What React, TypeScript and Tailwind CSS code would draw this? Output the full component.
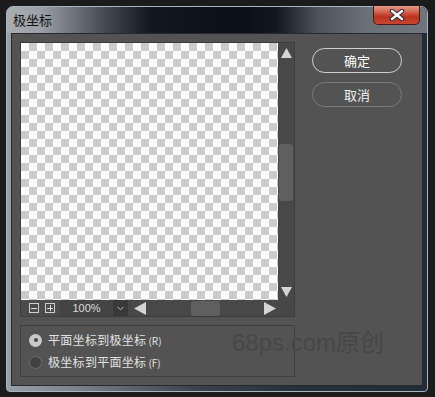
import React from "react"

function Tri({ dir, className }: { dir: "up" | "down" | "left" | "right"; className?: string }) {
  const pts = {
    up: "0,10 5.5,0 11,10",
    down: "0,0 11,0 5.5,10",
    left: "12,0 12,13 0,6.5",
    right: "0,0 12,6.5 0,13",
  }[dir]
  const vb = dir === "up" || dir === "down" ? "0 0 11 10" : "0 0 12 13"
  const w = dir === "up" || dir === "down" ? 11 : 12
  const h = dir === "up" || dir === "down" ? 10 : 13
  return (
    <svg width={w} height={h} viewBox={vb} className={className}>
      <polygon points={pts} fill="#d4d4d4" />
    </svg>
  )
}

function Radio({ checked, label, hint }: { checked?: boolean; label: string; hint: string }) {
  return (
    <div className="flex h-[22px] items-center gap-[6px]">
      {checked ? (
        <span className="flex h-[13px] w-[13px] items-center justify-center rounded-full bg-[#c9c9c9]">
          <span className="h-[4px] w-[4px] rounded-full bg-[#4a4a4a]" />
        </span>
      ) : (
        <span className="h-[13px] w-[13px] rounded-full border border-[#6c6c6c] bg-[#414141]" />
      )}
      <span className="text-[12px] tracking-[0.3px] text-[#e2e2e2]">
        {label}
        <span className="ml-[2px] text-[10px] tracking-normal">{hint}</span>
      </span>
    </div>
  )
}

export default function App() {
  return (
    <div className="h-[397px] w-[435px] overflow-hidden bg-[#1b1b1b] pl-[6px] pt-[6px] font-['Liberation_Sans','Noto_Sans_CJK_SC',sans-serif]">
      <div className="flex h-[386px] w-[422px] flex-col rounded-t-[7px] rounded-b-[4px] border border-[#aab4be] bg-[linear-gradient(to_right,#98a0a8_0%,#7d858d_15%,#39424d_45%,#26303b_70%,#222c37_100%)]">
        {/* title bar */}
        <div className="flex h-[26px] items-start justify-between rounded-t-[6px] bg-[linear-gradient(to_right,#a9adb2_0%,#9aa0a6_8%,#4a515b_22%,#121822_34%,#0a0f18_55%,#121821_64%,#4c535c_74%,#6a7179_86%,#6f767e_100%)] pl-[6px] pr-[7px]">
          <span className="mt-[5px] text-[13px] leading-[16px] text-[#141414] font-['Noto_Sans_CJK_SC',sans-serif]">
            极坐标
          </span>
          <div className="-mt-px flex h-[19px] w-[47px] items-center justify-center rounded-b-[5px] border border-t-0 border-[#4b1a14] bg-[linear-gradient(to_bottom,#e49a8c_0%,#d2604c_35%,#b8321f_60%,#c8472f_100%)]">
            <svg width="16" height="12" viewBox="0 0 16 12">
              <path d="M3 2 L13 10 M13 2 L3 10" stroke="#2a2a33" strokeWidth="4.5" strokeLinecap="round" />
              <path d="M3 2 L13 10 M13 2 L3 10" stroke="#ffffff" strokeWidth="2.4" strokeLinecap="round" />
            </svg>
          </div>
        </div>

        {/* content */}
        <div className="relative mx-[4px] flex h-[353px] border border-[#262a2f] bg-[#535353] font-['Noto_Sans_CJK_SC',sans-serif]">
          <div className="ml-[8px] mt-[8px] flex w-[275px] flex-col">
            {/* preview */}
            <div className="flex h-[275px] w-[275px] flex-col border border-[#3d3d3d] bg-[#4a4a4a]">
              <div className="flex h-[257px]">
                <div className="h-[257px] w-[257px] bg-[conic-gradient(#cccccc_25%,#ffffff_0_50%,#cccccc_0_75%,#ffffff_0)] bg-[length:16px_16px]" />
                <div className="flex w-[16px] flex-col items-center bg-[#484848] pb-[3px] pt-[5px]">
                  <Tri dir="up" />
                  <div className="flex-1" />
                  <div className="h-[57px] w-[14px] rounded-[3px] bg-[#5f5f5f]" />
                  <div className="flex-1" />
                  <Tri dir="down" />
                </div>
              </div>
              <div className="flex h-[16px] items-center">
                <div className="flex h-full w-[107px] items-center bg-[#4b4b4b] pl-[8px]">
                  <span className="flex h-[10px] w-[10px] items-center justify-center border border-[#cfcfcf]">
                    <span className="h-px w-[6px] bg-[#e0e0e0]" />
                  </span>
                  <span className="relative ml-[6px] flex h-[10px] w-[10px] items-center justify-center border border-[#cfcfcf]">
                    <span className="h-px w-[6px] bg-[#e0e0e0]" />
                    <span className="absolute h-[6px] w-px bg-[#e0e0e0]" />
                  </span>
                  <span className="ml-[5px] flex h-[16px] w-[53px] items-center justify-center bg-[#444444] font-['Liberation_Sans',sans-serif] text-[11px] text-[#dcdcdc]">
                    100%
                  </span>
                  <span className="flex h-[16px] w-[15px] items-center justify-center bg-[#393939]">
                    <svg width="7" height="5" viewBox="0 0 7 5">
                      <path d="M0.5 0.8 L3.5 3.8 L6.5 0.8" stroke="#bdbdbd" fill="none" strokeWidth="1" />
                    </svg>
                  </span>
                </div>
                <div className="flex h-full w-[150px] items-center bg-[#484848] pl-[6px] pr-[2px]">
                  <Tri dir="left" />
                  <div className="flex-1" />
                  <div className="h-[15px] w-[29px] rounded-[3px] bg-[#5f5f5f]" />
                  <div className="flex-1" />
                  <Tri dir="right" />
                </div>
                <div className="h-full w-[16px] bg-[#474747]" />
              </div>
            </div>

            {/* mode options */}
            <div className="mt-[8px] flex h-[52px] flex-col border border-[#3f3f3f] pl-[8px] pt-[3px]">
              <Radio checked label="平面坐标到极坐标" hint="(R)" />
              <Radio label="极坐标到平面坐标" hint="(F)" />
            </div>
          </div>

          {/* buttons */}
          <div className="ml-[17px] mt-[14px] flex flex-col gap-[9px]">
            <button className="flex h-[25px] w-[90px] items-center justify-center rounded-full border border-[#d0d0d0] text-[13px] text-white">
              确定
            </button>
            <button className="flex h-[25px] w-[90px] items-center justify-center rounded-full border border-[#7a7a7a] text-[13px] text-[#f0f0f0]">
              取消
            </button>
          </div>

          {/* watermark */}
          <span className="pointer-events-none absolute left-[220px] top-[294px] font-['Liberation_Sans','Noto_Sans_CJK_SC',sans-serif] text-[24px] leading-[30px] text-[#474747]">
            68ps.com原创
          </span>
        </div>
      </div>
    </div>
  )
}
